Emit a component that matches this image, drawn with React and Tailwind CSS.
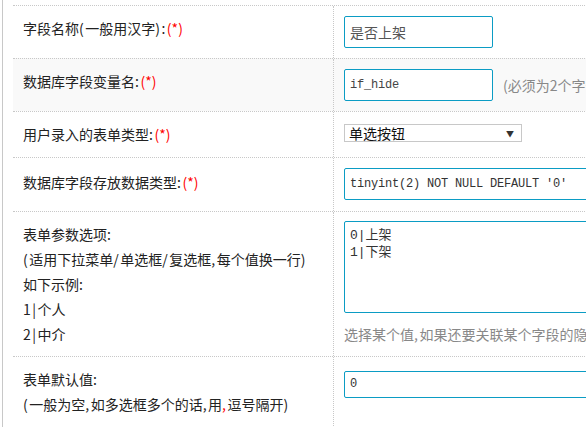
import React from "react";

const CJK = { fontFamily: '"Noto Sans CJK SC", "Noto Sans", sans-serif' };
const MONO = { fontFamily: '"Liberation Mono", "Noto Sans CJK SC", monospace' };

function Req() {
  return <span className="text-[#ff0000]">(*)</span>;
}

function A({ children }) {
  return <span className="tracking-[1.5px]">{children}</span>;
}

function Row({ h, bg = "bg-white", label, children, labelPt = "pt-[10px]", rightPt = "pt-[10px]" }) {
  return (
    <div className={`flex border-t border-dotted border-[#c8c8c8] ${h} ${bg}`}>
      <div className={`w-[321px] shrink-0 border-r border-dotted border-[#c8c8c8] pl-[10px] ${labelPt} text-[14px] leading-[25px] text-[#222]`}>
        {label}
      </div>
      <div className={`flex-1 pl-[10px] ${rightPt}`}>{children}</div>
    </div>
  );
}

const inputCls =
  "border border-[#0b9cc4] rounded-[2px] bg-white outline-none px-[5px]";

export default function App() {
  return (
    <div className="w-[586px] h-[427px] overflow-hidden bg-white" style={CJK}>
      <div className="ml-[2px] h-full border-l border-[#c8c8c8] pl-[10px] pt-[5px]">
        <div className="w-[760px]">
          <Row h="h-[53px]" label={<>字段名称<A>(</A>一般用汉字<A>):</A><Req /></>}>
            <input className={`${inputCls} h-[32px] w-[149px] text-[14px] text-[#555]`} style={CJK} defaultValue="是否上架" />
          </Row>
          <Row h="h-[53px]" bg="bg-[#f9f9f9]" label={<>数据库字段变量名<A>:</A><Req /></>}>
            <div className="flex items-center">
              <input className={`${inputCls} h-[32px] w-[149px] text-[12px] tracking-[-0.2px] text-[#444]`} style={MONO} defaultValue="if_hide" />
              <span className="ml-[10px] whitespace-nowrap text-[14px] text-[#888]">(必须为2个字母以上)</span>
            </div>
          </Row>
          <Row h="h-[46px]" label={<>用户录入的表单类型<A>:</A><Req /></>} rightPt="pt-[12px]">
            <div className="relative flex h-[18px] w-[178px] items-center border border-[#c8c8c8] bg-white pl-[4px] text-[14px] leading-[16px] text-[#111]">
              单选按钮
              <span className="absolute right-[7px] top-[1px] text-[8px] leading-[16px] text-[#333]">▼</span>
            </div>
          </Row>
          <Row h="h-[54px]" label={<>数据库字段存放数据类型<A>:</A><Req /></>} labelPt="pt-[12px]">
            <input
              className={`${inputCls} h-[32px] w-[400px] text-[12px] tracking-[-0.2px] text-[#333]`}
              style={MONO}
              defaultValue="tinyint(2) NOT NULL DEFAULT '0'"
            />
          </Row>
          <Row
            h="h-[145px]"
            rightPt="pt-[9px]"
            label={
              <>
                <div>表单参数选项<A>:</A></div>
                <div><A>(</A>适用下拉菜单<A>/</A>单选框<A>/</A>复选框<A>,</A>每个值换一行<A>)</A></div>
                <div>如下示例<A>:</A></div>
                <div><A>1|</A>个人</div>
                <div><A>2|</A>中介</div>
              </>
            }
          >
            <textarea
              className="block h-[92px] w-[400px] resize-none rounded-[2px] border border-[#0b9cc4] bg-white px-[5px] py-[5px] text-[13px] leading-[17px] text-[#333] outline-none"
              style={MONO}
              defaultValue={"0|上架\n1|下架"}
            />
            <div className="mt-[11px] whitespace-nowrap text-[14px] leading-[20px] text-[#888]">
              选择某个值<A>,</A>如果还要关联某个字段的隐藏
            </div>
          </Row>
          <Row
            h="h-[90px]"
            rightPt="pt-[11px]"
            label={
              <>
                <div>表单默认值<A>:</A></div>
                <div>
                  <A>(</A>一般为空<A>,</A>如多选框多个的话<A>,</A>用<span className="tracking-[1.5px] text-[#ff0000]">,</span>逗号隔开<A>)</A>
                </div>
              </>
            }
          >
            <input className={`${inputCls} h-[27px] w-[400px] text-[12px] text-[#333]`} style={MONO} defaultValue="0" />
          </Row>
        </div>
      </div>
    </div>
  );
}
